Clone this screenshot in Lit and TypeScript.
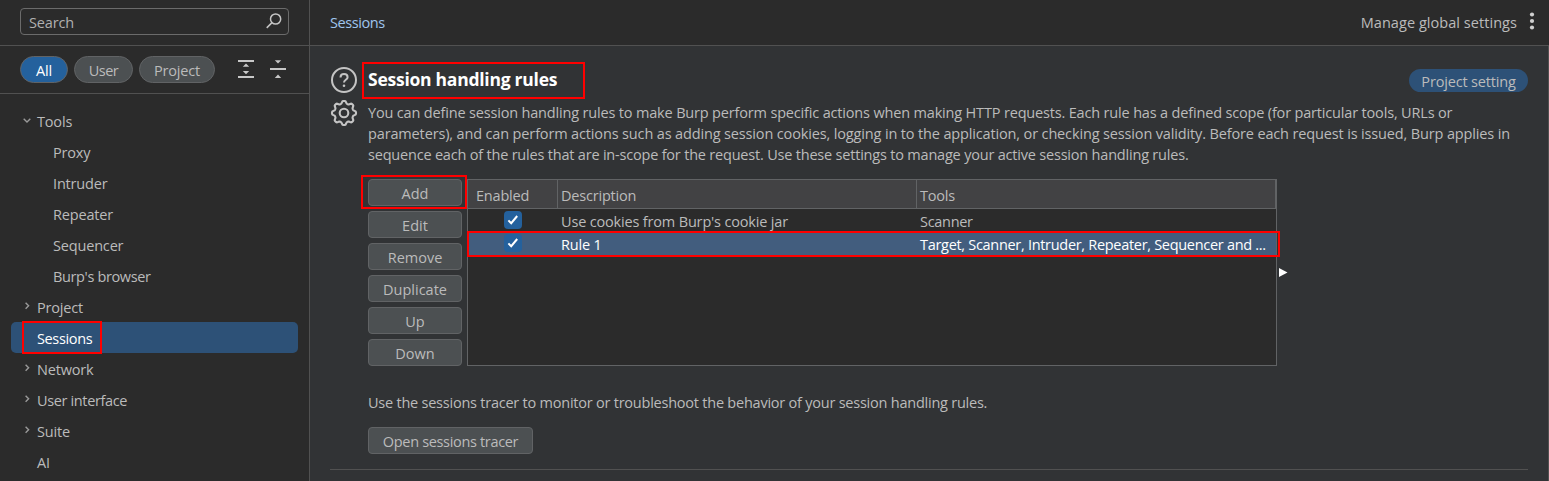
import { LitElement, html, css, svg, nothing } from "lit";
import { customElement, property } from "lit/decorators.js";
import { classMap } from "lit/directives/class-map.js";

interface TreeItem {
  label: string;
  kind: "open" | "closed" | "leaf" | "child";
  tight?: boolean;
  selected?: boolean;
}

const TREE: TreeItem[] = [
  { label: "Tools", kind: "open" },
  { label: "Proxy", kind: "child" },
  { label: "Intruder", kind: "child" },
  { label: "Repeater", kind: "child" },
  { label: "Sequencer", kind: "child" },
  { label: "Burp's browser", kind: "child", tight: true },
  { label: "Project", kind: "closed" },
  { label: "Sessions", kind: "leaf", tight: true, selected: true },
  { label: "Network", kind: "closed" },
  { label: "User interface", kind: "closed", tight: true },
  { label: "Suite", kind: "closed" },
  { label: "AI", kind: "leaf" },
];

const ACTIONS = ["Add", "Edit", "Remove", "Duplicate", "Up", "Down"];

const RULES = [
  { description: "Use cookies from Burp's cookie jar", tools: "Scanner", selected: false },
  {
    description: "Rule 1",
    tools: "Target, Scanner, Intruder, Repeater, Sequencer and ...",
    selected: true,
  },
];

const DESCRIPTION = [
  "You can define session handling rules to make Burp perform specific actions when making HTTP requests. Each rule has a defined scope (for particular tools, URLs or",
  "parameters), and can perform actions such as adding session cookies, logging in to the application, or checking session validity. Before each request is issued, Burp applies in",
  "sequence each of the rules that are in-scope for the request. Use these settings to manage your active session handling rules.",
];

/* Outline of an eight-toothed cog centred on (14, 14). */
function cogPath(): string {
  const points: string[] = [];
  const steps = 96;
  for (let i = 0; i < steps; i++) {
    const a = (i / steps) * Math.PI * 2;
    const wave = Math.cos(8 * a);
    const r = 10.8 + 1.3 * Math.tanh(1.8 * wave);
    points.push(`${(14 + r * Math.sin(a)).toFixed(2)} ${(14 - r * Math.cos(a)).toFixed(2)}`);
  }
  return `M${points.join("L")}Z`;
}

@customElement("settings-sidebar")
export class SettingsSidebar extends LitElement {
  static styles = css`
    :host {
      display: flex;
      flex-direction: column;
      box-sizing: border-box;
      width: 310px;
      height: 481px;
      border-right: 1px solid #515151;
      background: #2b2b2b;
      overflow: hidden;
    }
    .searchbar {
      box-sizing: border-box;
      height: 46px;
      flex: none;
      padding: 8px 20px 0;
      border-bottom: 1px solid #515151;
    }
    .search {
      display: flex;
      justify-content: space-between;
      align-items: flex-start;
      box-sizing: border-box;
      width: 269px;
      height: 27px;
      padding: 3px 5px 0 8px;
      border: 1px solid #6b6b6b;
      border-radius: 4px;
      color: #b0b0b0;
      line-height: 21px;
    }
    .filters {
      box-sizing: border-box;
      display: flex;
      align-items: flex-start;
      gap: 6px;
      flex: none;
      height: 48px;
      padding: 10px 0 0 20px;
      border-bottom: 1px solid #515151;
    }
    .pill {
      box-sizing: border-box;
      height: 27px;
      border: 1px solid #616365;
      border-radius: 14px;
      background: #4c5052;
      text-align: center;
      line-height: 27px;
    }
    .all {
      width: 48px;
      background: #24619d;
      color: #fff;
    }
    .user {
      width: 59px;
      letter-spacing: -0.5px;
    }
    .project {
      width: 76px;
    }
    .expand {
      margin: 3px 0 0 16px;
    }
    .collapse {
      margin: 3px 0 0 6px;
    }
    .tree {
      padding: 11px 11px 0;
    }
    .item {
      position: relative;
      display: flex;
      height: 31px;
      padding-left: 11px;
      border-radius: 5px;
      line-height: 33px;
      white-space: nowrap;
    }
    .twisty {
      width: 15px;
      flex: none;
    }
    .child {
      padding-left: 42px;
    }
    .tight {
      letter-spacing: -0.36px;
    }
    .selected {
      background: #2d5177;
      color: #fff;
    }
    .mark {
      position: absolute;
      left: 11px;
      top: -1px;
      width: 76px;
      height: 29px;
      border: 2px solid #f00;
    }
    svg {
      display: block;
    }
  `;

  private twisty(kind: TreeItem["kind"]) {
    if (kind === "child") return nothing;
    const d = kind === "open" ? "M1.7 13.8l3.3 3.2 3.3-3.2" : "M3.6 11.7l3 3-3 3";
    return html`<span class="twisty">
      ${kind === "leaf"
        ? nothing
        : html`<svg width="10" height="31" fill="none" stroke="#9a9a9a" stroke-width="1.4">
            <path d=${d} />
          </svg>`}
    </span>`;
  }

  render() {
    return html`
      <div class="searchbar">
        <div class="search">
          <span>Search</span>
          <svg width="18" height="18" viewBox="0 0 18 18" fill="none" stroke="#c4c4c4" stroke-width="1.5">
            <circle cx="10.6" cy="7" r="5.1" />
            <path d="M7 10.6L1.7 15.9" />
          </svg>
        </div>
      </div>
      <div class="filters">
        <div class="pill all">All</div>
        <div class="pill user">User</div>
        <div class="pill project">Project</div>
        <svg class="expand" width="20" height="22" fill="#c8c8c8">
          <path d="M1 1h16v2H1zM1 17h16v2H1zM9 4.5l3.2 3.3H5.8zM9 15.3l-3.2-3.3h6.4z" />
        </svg>
        <svg class="collapse" width="20" height="22" fill="#c8c8c8">
          <path d="M1 9h16v2H1zM5.8 1.2h6.4L9 4.6zM5.8 19h6.4L9 15.6z" />
        </svg>
      </div>
      <div class="tree">
        ${TREE.map(
          (t) => html`<div
            class=${classMap({ item: true, child: t.kind === "child", tight: !!t.tight, selected: !!t.selected })}
          >
            ${this.twisty(t.kind)}<span>${t.label}</span>${t.selected ? html`<i class="mark"></i>` : nothing}
          </div>`
        )}
      </div>
    `;
  }
}

@customElement("rules-table")
export class RulesTable extends LitElement {
  static styles = css`
    :host {
      display: block;
      position: relative;
      box-sizing: border-box;
      width: 810px;
      height: 187px;
      border: 1px solid #616365;
      background: #2b2b2b;
    }
    .row {
      display: grid;
      grid-template-columns: 90px 359px 359px;
      height: 23px;
      line-height: 25px;
      white-space: nowrap;
    }
    .head {
      height: 28px;
      line-height: 31px;
      border-bottom: 1px solid #616365;
      background: #424244;
      letter-spacing: -0.2px;
    }
    .cell {
      box-sizing: border-box;
      padding-left: 3px;
    }
    .head .cell {
      height: 28px;
      border-right: 1px solid #616365;
    }
    .head .enabled {
      padding-left: 8px;
    }
    .tools {
      letter-spacing: -0.3px;
    }
    .selected {
      background: #425d7e;
      color: #fff;
    }
    .check {
      padding: 2px 0 0 36px;
    }
    .mark {
      position: absolute;
      left: -1px;
      top: 51px;
      width: 809px;
      height: 22px;
      border: 2px solid #f00;
    }
    svg {
      display: block;
    }
  `;

  render() {
    return html`
      <div class="row head">
        <div class="cell enabled">Enabled</div>
        <div class="cell">Description</div>
        <div class="cell">Tools</div>
      </div>
      ${RULES.map(
        (r) => html`<div class=${classMap({ row: true, selected: r.selected })}>
          <div class="check">
            <svg width="18" height="18" viewBox="0 0 18 18">
              <rect width="18" height="18" rx="4" fill="#24619d" />
              <path d="M4.4 9.4l2.8 2.8L13.2 5" fill="none" stroke="#fff" stroke-width="2" />
            </svg>
          </div>
          <div class="cell">${r.description}</div>
          <div class="cell tools">${r.tools}</div>
        </div>`
      )}
      <i class="mark"></i>
    `;
  }
}

@customElement("push-button")
export class PushButton extends LitElement {
  @property() label = "";
  @property({ type: Boolean }) marked = false;

  static styles = css`
    :host {
      display: block;
      position: relative;
      box-sizing: border-box;
      height: 27px;
      border: 1px solid #616365;
      border-radius: 4px;
      background: #4c5052;
      text-align: center;
      line-height: 27px;
      letter-spacing: 0;
    }
    .mark {
      position: absolute;
      left: -8px;
      top: -5px;
      width: 102px;
      height: 30px;
      border: 2px solid #f00;
    }
  `;

  render() {
    return html`${this.label}${this.marked ? html`<i class="mark"></i>` : nothing}`;
  }
}

@customElement("app-root")
export class AppRoot extends LitElement {
  static styles = css`
    :host {
      display: flex;
      width: 1549px;
      height: 481px;
      overflow: hidden;
      background: #313335;
      color: #bbb;
      font: 14.5px/21px "Open Sans", "Noto Sans", sans-serif;
      letter-spacing: -0.17px;
    }
    .main {
      flex: 1;
      min-width: 0;
    }
    .topbar {
      box-sizing: border-box;
      display: flex;
      justify-content: space-between;
      height: 46px;
      padding: 12px 13px 0 20px;
      border-bottom: 1px solid #515151;
      background: #2b2b2b;
    }
    .crumb {
      color: #9fc5ee;
      letter-spacing: -0.42px;
    }
    .global {
      display: flex;
      gap: 11px;
      letter-spacing: 0.05px;
    }
    .body {
      box-sizing: border-box;
      height: 435px;
      border-right: 1px solid #515151;
      padding: 16px 20px 0;
    }
    .section {
      display: grid;
      grid-template-columns: 38px minmax(0, 1fr);
      height: 407px;
      border-bottom: 1px solid #515151;
    }
    .icons {
      padding-top: 4px;
    }
    .icons svg {
      margin-bottom: 5px;
    }
    .titlerow {
      display: flex;
      justify-content: space-between;
      height: 40px;
    }
    .title {
      position: relative;
      margin: 0;
      color: #fff;
      font-size: 17.5px;
      font-weight: 700;
      line-height: 35px;
      letter-spacing: -0.25px;
    }
    .mark {
      position: absolute;
      left: -6px;
      top: 0;
      width: 219px;
      height: 33px;
      border: 2px solid #f00;
    }
    .badge {
      box-sizing: border-box;
      width: 119px;
      height: 23px;
      margin-top: 7px;
      border-radius: 12px;
      background: #2d5177;
      text-align: center;
      line-height: 25px;
    }
    .text {
      white-space: nowrap;
    }
    .text:nth-of-type(3) {
      letter-spacing: -0.145px;
    }
    .text:nth-of-type(4) {
      letter-spacing: -0.2px;
    }
    .rules {
      display: flex;
      gap: 5px;
      margin-top: 14px;
    }
    .buttons {
      display: flex;
      flex-direction: column;
      gap: 5px;
      width: 94px;
    }
    .arrow {
      margin: 88px 0 0 -3px;
    }
    .tracer {
      margin-top: 26px;
      letter-spacing: -0.23px;
    }
    .open {
      width: 165px;
      margin-top: 14px;
      letter-spacing: -0.33px;
    }
    svg {
      display: block;
    }
  `;

  render() {
    return html`
      <settings-sidebar></settings-sidebar>
      <div class="main">
        <div class="topbar">
          <span class="crumb">Sessions</span>
          <div class="global">
            <span>Manage global settings</span>
            <svg width="8" height="20" fill="#d0d0d0">
              ${[2.5, 9, 15.5].map((y) => svg`<circle cx="4" cy=${y} r="2.1" />`)}
            </svg>
          </div>
        </div>
        <div class="body">
          <div class="section">
            <div class="icons">
              <svg width="28" height="28" fill="none" stroke="#c4c4c4" stroke-width="2">
                <circle cx="14" cy="14" r="12" />
                <path d="M10.5 11.4c0-2 1.5-3.3 3.5-3.3s3.6 1.3 3.6 3.1c0 2.6-3.6 2.6-3.6 5.3" />
                <circle cx="14" cy="19.8" r="1.3" fill="#c4c4c4" stroke="none" />
              </svg>
              <svg width="28" height="28" fill="none" stroke="#c4c4c4" stroke-width="2.1">
                <path d=${cogPath()} />
                <circle cx="14" cy="14" r="4.3" />
              </svg>
            </div>
            <div>
              <div class="titlerow">
                <h1 class="title">Session handling rules<i class="mark"></i></h1>
                <span class="badge">Project setting</span>
              </div>
              ${DESCRIPTION.map((line) => html`<div class="text">${line}</div>`)}
              <div class="rules">
                <div class="buttons">
                  ${ACTIONS.map((a) => html`<push-button .label=${a} .marked=${a === "Add"}></push-button>`)}
                </div>
                <rules-table></rules-table>
                <svg class="arrow" width="9" height="11" fill="#fff"><path d="M0 1L8.5 5.5 0 10z" /></svg>
              </div>
              <div class="text tracer">Use the sessions tracer to monitor or troubleshoot the behavior of your session handling rules.</div>
              <push-button class="open" .label=${"Open sessions tracer"}></push-button>
            </div>
          </div>
        </div>
      </div>
    `;
  }
}
